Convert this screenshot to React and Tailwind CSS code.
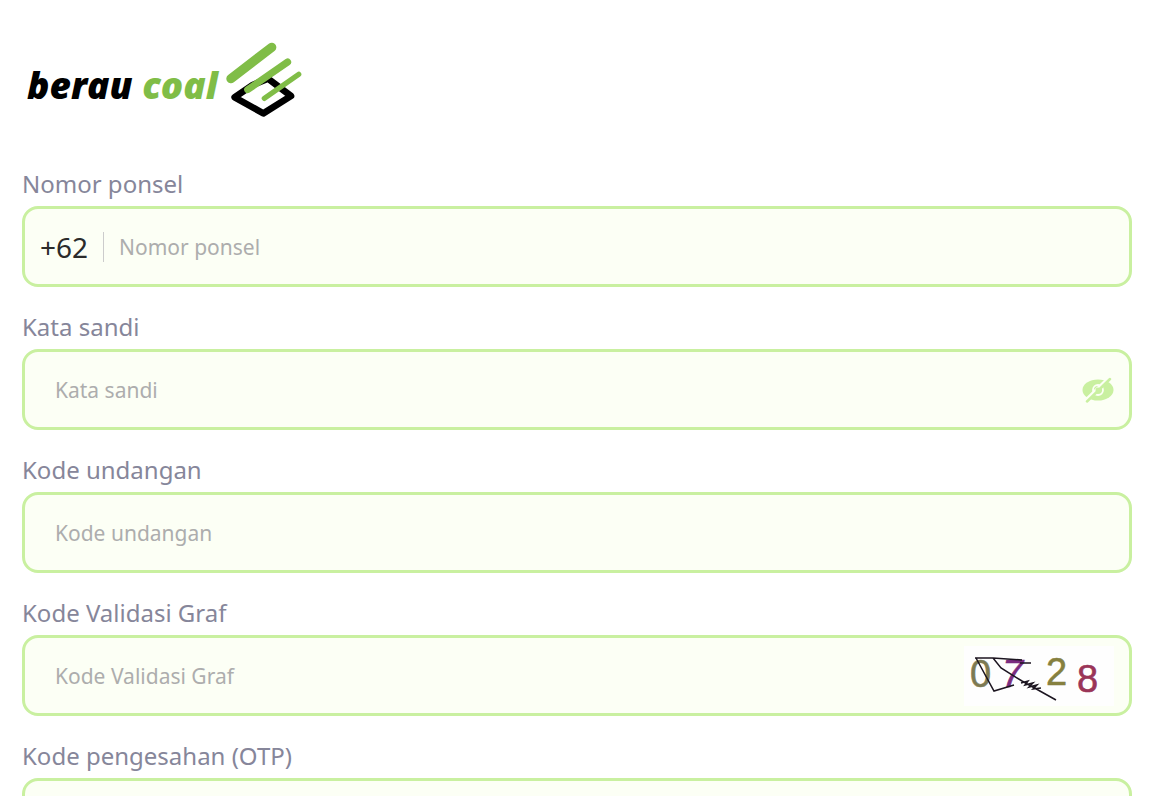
import React from "react";
import { useState } from "react";

const Logo = () => (
  <div className="flex items-center">
    <h1 className="pt-[10px] font-['Open_Sans',sans-serif] text-[37px] leading-10 font-extrabold italic text-black">
      berau <span className="text-[#80bd47]">coal</span>
    </h1>
    <svg
      viewBox="18 18 228 228"
      className="ml-2 h-[76px] w-[76px]"
      fill="none"
      strokeLinecap="round"
      strokeLinejoin="round"
      aria-hidden="true"
    >
      <path
        d="M98 147 L44 184 L130 232 L213 180 L144 128 Z"
        stroke="#000"
        strokeWidth="20"
      />
      <path d="M33 128 L155 34" stroke="#80bd47" strokeWidth="28" />
      <path d="M83 161 L203 78" stroke="#80bd47" strokeWidth="21" />
      <path d="M133 187 L236 115" stroke="#80bd47" strokeWidth="16" />
    </svg>
  </div>
);

const EyeOff = () => (
  <svg viewBox="0 0 32 26" className="h-[26px] w-8" fill="none">
    <ellipse cx="16" cy="13" rx="15.5" ry="10.5" fill="#c9f0a0" />
    <circle cx="16" cy="13" r="5" stroke="#fcfff5" strokeWidth="1.8" />
    <path d="M4 23.500 L27 1" stroke="#fcfff5" strokeWidth="4" />
    <circle cx="16" cy="13" r="2.500" fill="#c9f0a0" />
    <path
      d="M5 24.500 L28 2"
      stroke="#c9f0a0"
      strokeWidth="2.500"
      strokeLinecap="round"
    />
  </svg>
);

const Captcha = () => (
  <svg
    viewBox="0 0 150 60"
    className="h-[60px] w-[150px]"
    fontFamily="Liberation Sans, Arial, sans-serif"
    fontSize="38"
  >
    <rect width="150" height="60" fill="#fefefe" />
    <g strokeWidth="0.600">
      <text x="6" y="41" fill="#7d7a52" stroke="#7d7a52">0</text>
      <text x="38" y="41" fill="#7b2c80" stroke="#7b2c80" fontStyle="italic">7</text>
      <text x="82" y="39" fill="#86803f" stroke="#86803f">2</text>
      <text x="113" y="46" fill="#9a3558" stroke="#9a3558">8</text>
    </g>
    <path
      d="M11 12 L29 12 L58 14 M56 17 L67 17 M12 12 L30 45 L50 39 M29 12 L37 22 L58 35 L92 54 M57 37 L64 35 L61 39 L69 37 L65 41 L73 39 L69 43 L77 42"
      fill="none"
      stroke="#1c1520"
      strokeWidth="1.500"
    />
  </svg>
);

const Field = ({ id, label, type = "text", prefix, children }) => (
  <div>
    <label
      htmlFor={id}
      className="mb-2 block text-2xl leading-7 text-[#86869a]"
    >
      {label}
    </label>
    <div className="flex h-[81px] items-center rounded-2xl border-3 border-[#c9f0a0] bg-[#fcfff5] pr-[15px]">
      {prefix && (
        <span className="ml-[15px] border-r border-[#cccccc] pr-[15px] text-[28px] leading-[30px] text-[#2b2b2b]">
          {prefix}
        </span>
      )}
      <input
        id={id}
        type={type}
        placeholder={label}
        className={`h-full min-w-0 flex-1 bg-transparent text-[21px] text-[#2b2b2b] outline-none placeholder:text-[#adadad] ${
          prefix ? "pl-[15px]" : "pl-[30px]"
        }`}
      />
      {children}
    </div>
  </div>
);

const App = () => {
  const [visible, setVisible] = useState(false);

  return (
    <main className="min-h-screen bg-white pt-[42px] pr-[27px] pb-8 pl-[22px] font-['Noto_Sans',sans-serif]">
      <div className="pl-[5px]">
        <Logo />
      </div>
      <form className="mt-[52px] flex flex-col gap-[26px]">
        <Field id="phone" label="Nomor ponsel" type="tel" prefix="+62" />
        <Field
          id="password"
          label="Kata sandi"
          type={visible ? "text" : "password"}
        >
          <button
            type="button"
            aria-label="Kata sandi"
            onClick={() => setVisible(!visible)}
          >
            <EyeOff />
          </button>
        </Field>
        <Field id="invite" label="Kode undangan" />
        <Field id="captcha" label="Kode Validasi Graf">
          <button type="button" aria-label="Kode Validasi Graf">
            <Captcha />
          </button>
        </Field>
        <Field id="otp" label="Kode pengesahan (OTP)" />
      </form>
    </main>
  );
};

export default App;
